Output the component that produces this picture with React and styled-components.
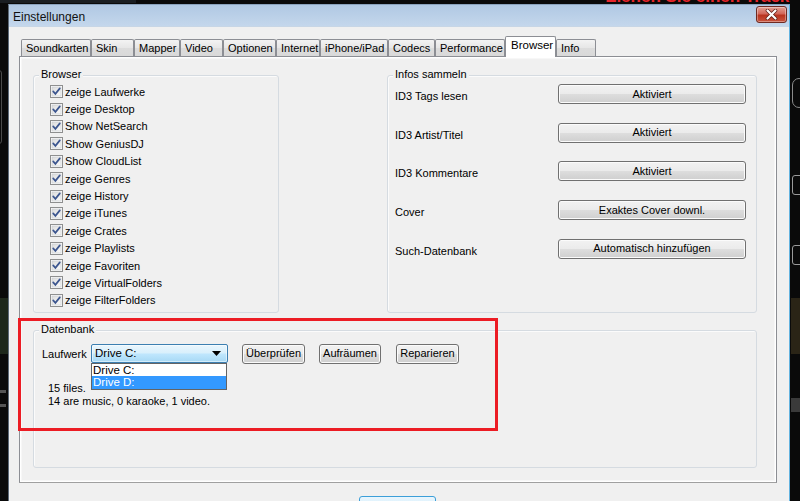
import React from 'react'
import styled, { createGlobalStyle } from 'styled-components'

const GlobalStyle = createGlobalStyle`
  html, body {
    margin: 0;
    padding: 0;
    background: #0a0a0a;
  }
  * { box-sizing: border-box; }
`

const Page = styled.div`
  position: relative;
  width: 800px;
  height: 501px;
  overflow: hidden;
  background: #0a0a0a;
  padding: 4px 0 0 8px;
  font-family: "Liberation Sans", Arial, sans-serif;
  font-size: 11px;
  color: #000;
`

// the player behind the dialog
const Backdrop = styled.div`
  position: absolute;
  left: ${({ x }) => x}px;
  top: ${({ y }) => y}px;
  width: ${({ w }) => w}px;
  height: ${({ h }) => h}px;
  background: ${({ bg }) => bg || 'transparent'};
  border: ${({ line }) => (line ? `1px solid ${line}` : 'none')};
  border-radius: ${({ r }) => r || 0}px;
`

const BackText = styled.div`
  position: absolute;
  left: ${({ x }) => x}px;
  top: ${({ y }) => y}px;
  color: ${({ color }) => color};
  font: bold 17px "Liberation Sans", Arial, sans-serif;
  white-space: nowrap;
`

const Window = styled.div`
  position: relative;
  width: 782px;
  height: 510px;
  border: 1px solid #5d6a78;
  border-top-color: #8aa2bd;
  border-right-color: #63b3e0;
  background: #f0f0f0;
  display: flex;
  flex-direction: column;
`

const TitleBar = styled.div`
  height: 22px;
  flex: none;
  display: flex;
  align-items: center;
  justify-content: space-between;
  padding: 0 2px 0 4px;
  background: linear-gradient(#b0c8e3, #c4d7ec);
  border-bottom: 1px solid #c7d6e6;
`

const Title = styled.span`
  font-size: 12px;
  color: #111;
  margin-top: 2px;
`

const CloseButton = styled.div`
  width: 31px;
  height: 17px;
  margin-top: -2px;
  border: 1px solid #6e2a22;
  border-radius: 3px;
  background: linear-gradient(#e3a193 0%, #d2675a 45%, #b9341f 55%, #c8543e 100%);
  display: flex;
  align-items: center;
  justify-content: center;
  box-shadow: inset 0 0 0 1px rgba(255, 255, 255, 0.35);
`

const Body = styled.div`
  flex: 1;
  padding: 9px 12px 0 10px;
  display: flex;
  flex-direction: column;
`

const TabStrip = styled.div`
  display: flex;
  align-items: flex-end;
  height: 20px;
  margin-left: 2px;
`

const Tab = styled.div`
  position: relative;
  width: ${({ w }) => w}px;
  height: ${({ active }) => (active ? 21 : 17)}px;
  margin-bottom: ${({ active }) => (active ? -1 : 0)}px;
  z-index: ${({ active }) => (active ? 2 : 1)};
  padding: ${({ active }) => (active ? '2px 0 0 5px' : '2px 0 0 4px')};
  border: 1px solid #8c8e94;
  border-bottom: none;
  border-radius: 2px 2px 0 0;
  background: ${({ active }) =>
    active ? '#ffffff' : 'linear-gradient(#f3f3f3, #e6e6e6 50%, #dcdcdc 51%, #d9d9d9)'};
  font-size: ${({ active }) => (active ? 11.5 : 11)}px;
  white-space: nowrap;
  line-height: 13px;
`

const Panel = styled.div`
  position: relative;
  height: 427px;
  border: 1px solid #8c8e94;
  border-bottom-color: #a0a0a0;
  box-shadow: inset 0 0 0 1px #ffffff, inset 0 0 0 2px #f7f7f7;
  background: #f0f0f0;
  padding: 18px 19px 14px 13px;
  display: flex;
  flex-direction: column;
  gap: 17px;
`

const TopRow = styled.div`
  display: flex;
  justify-content: space-between;
  height: 238px;
`

const Group = styled.div`
  position: relative;
  width: ${({ w }) => (w ? `${w}px` : 'auto')};
  height: ${({ h }) => (h ? `${h}px` : 'auto')};
  border: 1px solid #d5dbe1;
  border-radius: 3px;
  box-shadow: inset 1px 1px 0 #fbfbfb;
  padding: ${({ pad }) => pad};
`

const Legend = styled.span`
  position: absolute;
  top: -8px;
  left: 5px;
  padding: 0 2px;
  background: #f0f0f0;
  line-height: 13px;
`

const CheckRow = styled.div`
  height: 17.4px;
  display: flex;
  align-items: center;
  gap: 2px;
`

const Checkbox = () => (
  <svg width="13" height="13" viewBox="0 0 13 13">
    <defs>
      <linearGradient id="cbg" x1="0" y1="0" x2="1" y2="1">
        <stop offset="0" stopColor="#dcdcdc" />
        <stop offset="1" stopColor="#fbfbfb" />
      </linearGradient>
    </defs>
    <rect x="0.5" y="0.5" width="12" height="12" fill="#fdfdfd" stroke="#8e8f8f" />
    <rect x="2" y="2" width="9" height="9" fill="url(#cbg)" stroke="#c3c8cd" strokeWidth="0.6" />
    <path d="M3.2 6.4 L5.4 8.9 L9.8 3.4" fill="none" stroke="#3c568f" strokeWidth="1.7" strokeLinecap="round" />
  </svg>
)

const InfoRow = styled.div`
  height: 38.7px;
  display: flex;
  align-items: flex-start;
  justify-content: space-between;
`

const InfoLabel = styled.span`
  line-height: 13px;
  margin-top: 6px;
`

const Button = styled.div`
  width: ${({ w }) => w}px;
  height: 20px;
  flex: none;
  border: 1px solid #707070;
  border-radius: 3px;
  background: linear-gradient(#f2f2f2 0%, #ebebeb 48%, #dddddd 52%, #cfcfcf 100%);
  box-shadow: inset 0 0 0 1px #fbfbfb;
  display: flex;
  align-items: center;
  justify-content: center;
  white-space: nowrap;
  line-height: 13px;
`

const DriveRow = styled.div`
  display: flex;
  align-items: center;
  height: 21px;
`

const DriveLabel = styled.span`
  width: 49px;
  flex: none;
`

const ComboWrap = styled.div`
  position: relative;
  width: 137px;
  height: 19px;
  margin: -1px 14px 0 0;
  flex: none;
`

const Combo = styled.div`
  height: 100%;
  border: 1px solid #3c7fb1;
  border-radius: 2px;
  background: linear-gradient(#eaf6fd 0%, #d9f0fc 45%, #bee6fd 55%, #a7d9f5 100%);
  box-shadow: inset 0 0 0 1px rgba(255, 255, 255, 0.5);
  display: flex;
  align-items: center;
  justify-content: space-between;
  padding: 0 6px 0 3px;
  font-size: 11.5px;
`

const DropList = styled.div`
  position: absolute;
  top: 19px;
  left: 0;
  width: 136px;
  border: 1px solid #646464;
  background: #fff;
  z-index: 5;
`

const DropItem = styled.div`
  height: 12.5px;
  line-height: 12.5px;
  padding-left: 1px;
  font-size: 11.5px;
  background: ${({ selected }) => (selected ? '#3399ff' : '#fff')};
  color: ${({ selected }) => (selected ? '#fff' : '#000')};
`

const ButtonGap = styled.div`
  width: ${({ w }) => w}px;
  flex: none;
`

const Stats = styled.div`
  margin: 18px 0 0 6px;
  line-height: 12.5px;
`

const Annotation = styled.div`
  position: absolute;
  left: -2px;
  top: 261px;
  width: 480px;
  height: 113px;
  border: 3px solid #ec1c24;
  pointer-events: none;
  z-index: 6;
`

const Footer = styled.div`
  display: flex;
  padding: 13px 0 0 340px;
`

const OkButton = styled.div`
  width: 77px;
  height: 22px;
  border: 1px solid #3c9fd9;
  border-radius: 3px;
  background: linear-gradient(#eaf6fd, #bee6fd);
`

const tabs = [
  { label: 'Soundkarten', w: 70 },
  { label: 'Skin', w: 43 },
  { label: 'Mapper', w: 46 },
  { label: 'Video', w: 43 },
  { label: 'Optionen', w: 53 },
  { label: 'Internet', w: 44 },
  { label: 'iPhone/iPad', w: 68 },
  { label: 'Codecs', w: 47 },
  { label: 'Performance', w: 70 },
  { label: 'Browser', w: 51, active: true },
  { label: 'Info', w: 40 },
]

const browserItems = [
  'zeige Laufwerke',
  'zeige Desktop',
  'Show NetSearch',
  'Show GeniusDJ',
  'Show CloudList',
  'zeige Genres',
  'zeige History',
  'zeige iTunes',
  'zeige Crates',
  'zeige Playlists',
  'zeige Favoriten',
  'zeige VirtualFolders',
  'zeige FilterFolders',
]

const infoItems = [
  { label: 'ID3 Tags lesen', value: 'Aktiviert' },
  { label: 'ID3 Artist/Titel', value: 'Aktiviert' },
  { label: 'ID3 Kommentare', value: 'Aktiviert' },
  { label: 'Cover', value: 'Exaktes Cover downl.' },
  { label: 'Such-Datenbank', value: 'Automatisch hinzufügen' },
]

export default function App() {
  return (
    <>
      <GlobalStyle />
      <Page>
        <Backdrop x={-4} y={-6} w={140} h={9} bg="#1a1e22" />
        <BackText x={606} y={-13} color="#e8242a">Ziehen Sie einen Track</BackText>
        <Backdrop x={-6} y={70} w={8} h={74} line="#4a4a4a" r={3} />
        <Backdrop x={0} y={298} w={8} h={56} bg="#1e281b" />
        <Backdrop x={0} y={390} w={6} h={3} bg="#555" />
        <Backdrop x={0} y={404} w={6} h={3} bg="#555" />
        <Backdrop x={792} y={78} w={14} h={30} line="#8a8a8a" r={7} />
        <Backdrop x={792} y={175} w={12} h={20} line="#9a9a9a" r={3} />
        <Backdrop x={792} y={245} w={12} h={20} line="#9a9a9a" r={3} />
        <Backdrop x={791} y={298} w={10} h={56} bg="#2a2416" />
        <Backdrop x={791} y={398} w={10} h={14} bg="#3a3a3a" />

        <Window>
          <TitleBar>
            <Title>Einstellungen</Title>
            <CloseButton>
              <svg width="13" height="11" viewBox="0 0 13 11">
                <path d="M2.5 1.5 L10.5 9.5 M10.5 1.5 L2.5 9.5" stroke="#5a1b12" strokeWidth="3.6" strokeLinecap="round" />
                <path d="M2.5 1.5 L10.5 9.5 M10.5 1.5 L2.5 9.5" stroke="#ffffff" strokeWidth="2.2" strokeLinecap="round" />
              </svg>
            </CloseButton>
          </TitleBar>

          <Body>
            <TabStrip>
              {tabs.map((t) => (
                <Tab key={t.label} w={t.w} active={t.active}>
                  {t.label}
                </Tab>
              ))}
            </TabStrip>

            <Panel>
              <TopRow>
                <Group w={246} pad="7px 0 0 16px">
                  <Legend>Browser</Legend>
                  {browserItems.map((label) => (
                    <CheckRow key={label}>
                      <Checkbox />
                      {label}
                    </CheckRow>
                  ))}
                </Group>

                <Group w={370} pad="8px 10px 0 7px">
                  <Legend>Infos sammeln</Legend>
                  {infoItems.map((item) => (
                    <InfoRow key={item.label}>
                      <InfoLabel>{item.label}</InfoLabel>
                      <Button w={188}>{item.value}</Button>
                    </InfoRow>
                  ))}
                </Group>
              </TopRow>

              <Group h={138} pad="12px 0 0 8px">
                <Legend>Datenbank</Legend>
                <DriveRow>
                  <DriveLabel>Laufwerk</DriveLabel>
                  <ComboWrap>
                    <Combo>
                      <span>Drive C:</span>
                      <svg width="9" height="5" viewBox="0 0 9 5">
                        <path d="M0 0 H9 L4.5 5 Z" fill="#000" />
                      </svg>
                    </Combo>
                    <DropList>
                      <DropItem>Drive C:</DropItem>
                      <DropItem selected>Drive D:</DropItem>
                    </DropList>
                  </ComboWrap>
                  <Button w={63}>Überprüfen</Button>
                  <ButtonGap w={14} />
                  <Button w={62}>Aufräumen</Button>
                  <ButtonGap w={15} />
                  <Button w={63}>Reparieren</Button>
                </DriveRow>
                <Stats>
                  15 files.
                  <br />
                  14 are music, 0 karaoke, 1 video.
                </Stats>
              </Group>

              <Annotation />
            </Panel>

            <Footer>
              <OkButton />
            </Footer>
          </Body>
        </Window>
      </Page>
    </>
  )
}
